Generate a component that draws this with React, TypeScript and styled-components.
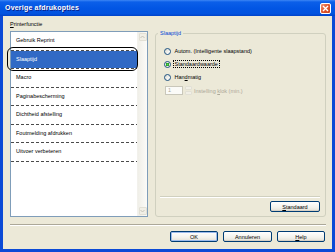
import styled, { createGlobalStyle } from 'styled-components';

const GlobalStyle = createGlobalStyle`
  html, body {
    margin: 0;
    padding: 0;
    background: #ffffff;
  }
  body {
    font-family: 'Liberation Sans', Arial, sans-serif;
  }
`;

const Window = styled.div`
  width: 335px;
  height: 252px;
  box-sizing: border-box;
  display: flex;
  flex-direction: column;
  background: #0b4ad6;
  overflow: hidden;
`;

const TitleBar = styled.div`
  height: 16px;
  flex: none;
  display: flex;
  align-items: center;
  justify-content: space-between;
  padding: 0 4px 0 5px;
  background: linear-gradient(
    to bottom,
    #3d86f4 0,
    #0b5fe9 2px,
    #0256e4 50%,
    #0253df 85%,
    #0143c9 100%
  );
`;

const Title = styled.span`
  color: #ffffff;
  font-size: 7px;
  font-weight: bold;
  line-height: 8px;
  letter-spacing: 0.2px;
  text-shadow: 1px 1px 0 #0a1f8a;
`;

const CloseButton = styled.div`
  width: 11px;
  height: 11px;
  box-sizing: border-box;
  border: 1px solid #ffffff;
  border-radius: 2px;
  background: linear-gradient(135deg, #f09878 0%, #e25a32 45%, #c9431e 100%);
  display: flex;
  align-items: center;
  justify-content: center;
`;

const Body = styled.div`
  flex: 1;
  margin: 0 3px 3px 3px;
  background: #ece9d8;
  padding: 4px 6px 0 7px;
  display: flex;
  flex-direction: column;
  font-size: 5.5px;
  color: #000000;
`;

const MainRow = styled.div`
  display: flex;
  gap: 7px;
  height: 197px;
`;

const LeftColumn = styled.div`
  width: 138px;
  display: flex;
  flex-direction: column;
`;

const Caption = styled.div`
  height: 8px;
  line-height: 8px;
  margin-bottom: 3px;
`;

const ListBox = styled.div`
  flex: 1;
  display: flex;
  box-sizing: border-box;
  border: 1px solid #7f9db9;
  background: #ffffff;
`;

const ItemList = styled.div`
  flex: 1;
  display: flex;
  flex-direction: column;
`;

const ListItem = styled.div<{ $selected?: boolean }>`
  position: relative;
  height: 17.5px;
  line-height: 17.5px;
  padding-left: 5px;
  color: ${(p) => (p.$selected ? '#ffffff' : '#000000')};
  background: ${(p) => (p.$selected ? '#316ac5' : 'transparent')};

  &::before {
    content: '';
    position: absolute;
    left: 0;
    right: 0;
    bottom: -1px;
    height: 1px;
    background: repeating-linear-gradient(
      to right,
      #4a4a4a 0,
      #4a4a4a 3px,
      transparent 3px,
      transparent 5px
    );
  }
`;

const Highlight = styled.span`
  position: absolute;
  left: -4px;
  top: -3.5px;
  width: 131px;
  height: 24px;
  box-sizing: border-box;
  border: 1.5px solid #000000;
  border-radius: 6px;
`;

const ItemGap = styled.div`
  height: 1px;
  flex: none;
`;

const ScrollBar = styled.div`
  width: 9px;
  display: flex;
  flex-direction: column;
  justify-content: space-between;
  align-items: center;
  padding: 1px 0;
  background: linear-gradient(to right, #f0efe8, #fbfbf8);
  border-left: 1px solid #f2f1ec;
`;

const ScrollArrow = styled.div`
  width: 8px;
  height: 8px;
  box-sizing: border-box;
  border: 1px solid #e2e0d5;
  border-radius: 1px;
  background: #f1efe6;
  display: flex;
  align-items: center;
  justify-content: center;
`;

const GroupBox = styled.fieldset`
  flex: 1;
  margin: 9.5px 0 0 0;
  padding: 0;
  min-width: 0;
  border: 1px solid #d0d0bf;
  border-radius: 3px;
  display: flex;
  flex-direction: column;
`;

const GroupLegend = styled.legend`
  color: #0046d5;
  padding: 0 2px;
  margin-left: 2px;
  line-height: 7px;
  font-size: 5.5px;
`;

const Options = styled.div`
  display: flex;
  flex-direction: column;
  padding: 8px 0 0 8px;
`;

const OptionRow = styled.div`
  height: 13px;
  display: flex;
  align-items: center;
  gap: 1.5px;
`;

const Radio = styled.span<{ $checked?: boolean }>`
  width: 7px;
  height: 7px;
  flex: none;
  box-sizing: border-box;
  border-radius: 50%;
  border: 1px solid #1c5180;
  background: ${(p) =>
    p.$checked
      ? 'radial-gradient(circle at center, #5fcf5f 0, #21a121 1.4px, #e9e9e2 1.9px, #ffffff 100%)'
      : 'linear-gradient(135deg, #d9d9d0 0%, #f4f4f0 60%, #ffffff 100%)'};
`;

const OptionLabel = styled.span<{ $focused?: boolean }>`
  line-height: 6px;
  padding: 0 1px;
  border: 1px ${(p) => (p.$focused ? 'dotted #000000' : 'solid transparent')};
`;

const SpinRow = styled.div`
  display: flex;
  align-items: center;
  margin: 2.5px 0 0 1px;
  height: 9px;
  color: #aca899;
`;

const SpinInput = styled.div`
  width: 18px;
  height: 9px;
  box-sizing: border-box;
  border: 1px solid #c9c7ba;
  background: #fbfbf8;
  padding-left: 2px;
  line-height: 7px;
`;

const SpinButtons = styled.div`
  width: 7px;
  height: 9px;
  margin: 0 2px 0 2px;
  display: flex;
  flex-direction: column;
  gap: 1px;
`;

const SpinHalf = styled.div`
  flex: 1;
  background: #f1efe6;
  border: 1px solid #e2e0d5;
  border-radius: 1px;
`;

const GroupFooter = styled.div`
  margin-top: auto;
  padding: 0 5px 4px 4px;
  display: flex;
  flex-direction: column;
  align-items: flex-end;
`;

const Etched = styled.div`
  align-self: stretch;
  height: 0;
  border-top: 1px solid #d0d0bf;
  border-bottom: 1px solid #ffffff;
`;

const Button = styled.div<{ $width: number; $default?: boolean }>`
  width: ${(p) => p.$width}px;
  height: 11px;
  box-sizing: border-box;
  border: 1px solid #003c74;
  border-radius: 2px;
  background: linear-gradient(to bottom, #ffffff 0%, #f3f2ec 60%, #e3e0d6 100%);
  box-shadow: ${(p) =>
    p.$default ? 'inset 0 0 0 1px #9dbbec' : 'inset 0 -1px 0 #d6d0c5'};
  display: flex;
  align-items: center;
  justify-content: center;
  line-height: 8px;
`;

const StandardButton = styled(Button)`
  margin-top: 3px;
`;

const BottomSeparator = styled.div`
  margin-top: 7px;
  border-top: 1px solid #aca899;
  border-bottom: 1px solid #ffffff;
`;

const ButtonBar = styled.div`
  display: flex;
  justify-content: flex-end;
  gap: 5px;
  margin-top: 5px;
  padding-right: 1px;
`;

const items = [
  'Gebruik Reprint',
  'Slaaptijd',
  'Macro',
  'Paginabescherming',
  'Dichtheid afstelling',
  'Foutmelding afdrukken',
  'Uitvoer verbeteren',
];

const Chevron = ({ up }: { up?: boolean }) => (
  <svg width="5" height="4" viewBox="0 0 5 4">
    <path
      d={up ? 'M0.5 3 L2.5 1 L4.5 3' : 'M0.5 1 L2.5 3 L4.5 1'}
      fill="none"
      stroke="#c5c3b8"
      strokeWidth="1"
    />
  </svg>
);

const App = () => (
  <>
    <GlobalStyle />
    <Window>
      <TitleBar>
        <Title>Overige afdrukopties</Title>
        <CloseButton>
          <svg width="7" height="7" viewBox="0 0 7 7">
            <path d="M1 1 L6 6 M6 1 L1 6" stroke="#ffffff" strokeWidth="1.4" />
          </svg>
        </CloseButton>
      </TitleBar>
      <Body>
        <MainRow>
          <LeftColumn>
            <Caption>
              <u>P</u>rinterfunctie
            </Caption>
            <ListBox>
              <ItemList>
                {items.map((label, i) => (
                  <div key={label}>
                    <ListItem $selected={i === 1}>
                      {label}
                      {i === 1 && <Highlight />}
                    </ListItem>
                    <ItemGap />
                  </div>
                ))}
              </ItemList>
              <ScrollBar>
                <ScrollArrow>
                  <Chevron up />
                </ScrollArrow>
                <ScrollArrow>
                  <Chevron />
                </ScrollArrow>
              </ScrollBar>
            </ListBox>
          </LeftColumn>
          <GroupBox>
            <GroupLegend>Slaaptijd</GroupLegend>
            <Options>
              <OptionRow>
                <Radio />
                <OptionLabel>Autom. (Intelligente slaapstand)</OptionLabel>
              </OptionRow>
              <OptionRow>
                <Radio $checked />
                <OptionLabel $focused>Standaardwaarde</OptionLabel>
              </OptionRow>
              <OptionRow>
                <Radio />
                <OptionLabel>
                  Han<u>d</u>matig
                </OptionLabel>
              </OptionRow>
              <SpinRow>
                <SpinInput>1</SpinInput>
                <SpinButtons>
                  <SpinHalf />
                  <SpinHalf />
                </SpinButtons>
                <span>
                  Instelling <u>k</u>lok (min.)
                </span>
              </SpinRow>
            </Options>
            <GroupFooter>
              <Etched />
              <StandardButton $width={50}>
                <span>
                  <u>S</u>tandaard
                </span>
              </StandardButton>
            </GroupFooter>
          </GroupBox>
        </MainRow>
        <BottomSeparator />
        <ButtonBar>
          <Button $width={48} $default>
            OK
          </Button>
          <Button $width={49}>Annuleren</Button>
          <Button $width={48}>
            <span>
              <u>H</u>elp
            </span>
          </Button>
        </ButtonBar>
      </Body>
    </Window>
  </>
);

export default App;
